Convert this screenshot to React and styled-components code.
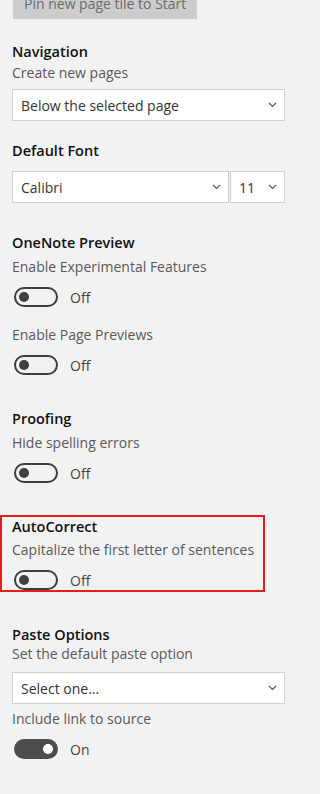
import React from "react";
import styled, { createGlobalStyle } from "styled-components";

const GlobalStyle = createGlobalStyle`
    html, body {
        margin: 0;
        padding: 0;
        background: #f2f2f2;
    }
    body {
        font-family: "Open Sans", "Noto Sans", sans-serif;
        -webkit-font-smoothing: antialiased;
    }
`;

const Pane = styled.div`
    width: 297px;
    min-height: 794px;
    padding: 0 12px 0 12px;
    box-sizing: border-box;
    background: #f2f2f2;
    overflow: hidden;
`;

const PinButton = styled.button`
    display: block;
    margin: -12px 0 0 1px;
    width: 184px;
    height: 31px;
    border: none;
    background: #cccccc;
    color: #6b6b6b;
    font-family: inherit;
    font-size: 14px;
    text-align: left;
    padding: 0 0 0 11px;
`;

const Section = styled.section`
    margin-top: ${(p) => p.$top}px;
`;

const Highlight = styled.section`
    margin: ${(p) => p.$top}px 0 0 -12px;
    width: 265px;
    box-sizing: border-box;
    border: 2px solid #e81c1c;
    padding: 0 0 0 10px;
`;

const Heading = styled.h3`
    margin: 0;
    font-size: 14.5px;
    line-height: 20px;
    font-weight: 600;
    color: #111;
`;

const Desc = styled.div`
    margin-top: ${(p) => p.$gap ?? 4}px;
    font-size: 14px;
    line-height: 20px;
    color: #595959;
`;

const SelectBox = styled.div`
    display: flex;
    align-items: center;
    justify-content: space-between;
    box-sizing: border-box;
    height: 32px;
    width: ${(p) => (p.$width ? `${p.$width}px` : "auto")};
    flex: ${(p) => (p.$width ? "none" : "1")};
    border: 1px solid #cfcfcf;
    background: #fff;
    padding: 0 7px 0 8px;
    font-size: 14px;
    color: #333;
`;

const SelectRow = styled.div`
    display: flex;
    gap: 1px;
    margin-top: ${(p) => p.$gap}px;
    width: 273px;
`;

const ToggleRow = styled.div`
    display: flex;
    align-items: center;
    margin-top: 10px;
    margin-left: 2px;
    height: 20px;
`;

const Track = styled.div`
    position: relative;
    width: 44px;
    height: 20px;
    box-sizing: border-box;
    border-radius: 10px;
    border: 2px solid ${(p) => (p.$on ? "#4d4d4d" : "#3f3f3f")};
    background: ${(p) => (p.$on ? "#4d4d4d" : "transparent")};
`;

const Knob = styled.div`
    position: absolute;
    top: 3px;
    left: ${(p) => (p.$on ? "27px" : "3px")};
    width: 10px;
    height: 10px;
    border-radius: 50%;
    background: ${(p) => (p.$on ? "#fff" : "#3f3f3f")};
`;

const ToggleLabel = styled.span`
    margin-left: 12px;
    font-size: 14px;
    color: #444;
`;

const Chevron = () => (
    <svg width="9" height="6" viewBox="0 0 9 6">
        <path d="M1 1l3.5 3.5L8 1" fill="none" stroke="#555" strokeWidth="1.2" />
    </svg>
);

const Select = ({ children, width }) => (
    <SelectBox $width={width}>
        <span>{children}</span>
        <Chevron />
    </SelectBox>
);

const Toggle = ({ on }) => (
    <ToggleRow>
        <Track $on={on}>
            <Knob $on={on} />
        </Track>
        <ToggleLabel>{on ? "On" : "Off"}</ToggleLabel>
    </ToggleRow>
);

export default function App() {
    return (
        <>
            <GlobalStyle />
            <Pane>
                <PinButton>Pin new page tile to Start</PinButton>

                <Section $top={23}>
                    <Heading>Navigation</Heading>
                    <Desc $gap={1}>Create new pages</Desc>
                    <SelectRow $gap={6}>
                        <Select>Below the selected page</Select>
                    </SelectRow>
                </Section>

                <Section $top={20}>
                    <Heading>Default Font</Heading>
                    <SelectRow $gap={10}>
                        <Select>Calibri</Select>
                        <Select width={55}>11</Select>
                    </SelectRow>
                </Section>

                <Section $top={30}>
                    <Heading>OneNote Preview</Heading>
                    <Desc>Enable Experimental Features</Desc>
                    <Toggle />
                    <Desc $gap={18}>Enable Page Previews</Desc>
                    <Toggle />
                </Section>

                <Section $top={34}>
                    <Heading>Proofing</Heading>
                    <Desc>Hide spelling errors</Desc>
                    <Toggle />
                </Section>

                <Highlight $top={32}>
                    <Heading>AutoCorrect</Heading>
                    <Desc $gap={3}>Capitalize the first letter of sentences</Desc>
                    <Toggle />
                </Highlight>

                <Section $top={33}>
                    <Heading>Paste Options</Heading>
                    <Desc $gap={-1}>Set the default paste option</Desc>
                    <SelectRow $gap={8}>
                        <Select>Select one...</Select>
                    </SelectRow>
                    <Desc $gap={5}>Include link to source</Desc>
                    <Toggle on />
                </Section>
            </Pane>
        </>
    );
}
